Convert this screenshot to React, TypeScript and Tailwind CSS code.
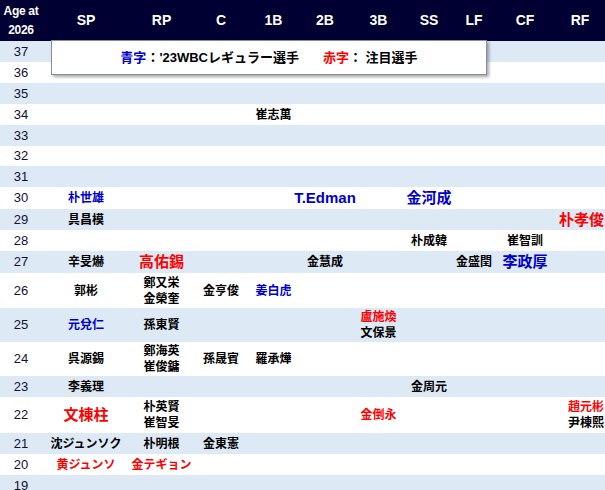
const cols = ['SP', 'RP', 'C', '1B', '2B', '3B', 'SS', 'LF', 'CF', 'RF']
const widths = [42, 88, 63, 56, 49, 54, 53, 48, 42, 60, 50]

type Cell = { t: string; c?: 'b' | 'r'; big?: boolean }[]
type Row = { age: number; h: number; cells?: Record<string, Cell> }

const rows: Row[] = [
  { age: 37, h: 21 }, { age: 36, h: 21 }, { age: 35, h: 21 },
  { age: 34, h: 21, cells: { '1B': [{ t: '崔志萬' }] } },
  { age: 33, h: 21 }, { age: 32, h: 20 }, { age: 31, h: 21 },
  { age: 30, h: 22, cells: { SP: [{ t: '朴世雄', c: 'b' }], '2B': [{ t: 'T.Edman', c: 'b', big: true }], SS: [{ t: '金河成', c: 'b', big: true }] } },
  { age: 29, h: 21, cells: { SP: [{ t: '具昌模' }], RF: [{ t: '朴孝俊', c: 'r', big: true }] } },
  { age: 28, h: 21, cells: { SS: [{ t: '朴成韓' }], CF: [{ t: '崔智訓' }] } },
  { age: 27, h: 22, cells: { SP: [{ t: '辛旻爀' }], RP: [{ t: '高佑錫', c: 'r', big: true }], '2B': [{ t: '金慧成' }], LF: [{ t: '金盛閏' }], CF: [{ t: '李政厚', c: 'b', big: true }] } },
  { age: 26, h: 35, cells: { SP: [{ t: '郭彬' }], RP: [{ t: '鄭又栄' }, { t: '金榮奎' }], C: [{ t: '金亨俊' }], '1B': [{ t: '姜白虎', c: 'b' }] } },
  { age: 25, h: 34, cells: { SP: [{ t: '元兌仁', c: 'b' }], RP: [{ t: '孫東賢' }], '3B': [{ t: '盧施煥', c: 'r' }, { t: '文保景' }] } },
  { age: 24, h: 34, cells: { SP: [{ t: '呉源錫' }], RP: [{ t: '鄭海英' }, { t: '崔俊鏞' }], C: [{ t: '孫晟賓' }], '1B': [{ t: '羅承燁' }] } },
  { age: 23, h: 21, cells: { SP: [{ t: '李義理' }], SS: [{ t: '金周元' }] } },
  { age: 22, h: 36, cells: { SP: [{ t: '文棟柱', c: 'r', big: true }], RP: [{ t: '朴英賢' }, { t: '崔智旻' }], '3B': [{ t: '金倒永', c: 'r' }], RF: [{ t: '趙元彬', c: 'r' }, { t: '尹棟熙' }] } },
  { age: 21, h: 21, cells: { SP: [{ t: '沈ジュンソク' }], RP: [{ t: '朴明根' }], C: [{ t: '金東憲' }] } },
  { age: 20, h: 21, cells: { SP: [{ t: '黄ジュンソ', c: 'r' }], RP: [{ t: '金テギョン', c: 'r' }] } },
  { age: 19, h: 21 },
]

const font = { fontFamily: '"Liberation Sans", "Noto Sans CJK JP", sans-serif' }

export default function App() {
  return (
    <div className="relative w-[605px] h-[490px] overflow-hidden bg-white" style={font}>
      <div className="flex h-[41px] bg-[#000033] text-white font-bold">
        <div className="w-[42px] flex flex-col items-center justify-center text-[12px] leading-[19px] tracking-tight">
          <span>Age at</span><span>2026</span>
        </div>
        {cols.map((c, i) => (
          <div key={c} style={{ width: widths[i + 1] }} className="flex items-center justify-center text-[14px]">{c}</div>
        ))}
      </div>
      {rows.map((r, idx) => (
        <div key={r.age} style={{ height: r.h }} className={`flex ${idx % 2 === 0 ? 'bg-[#dde9f5]' : 'bg-white'}`}>
          <div className="w-[42px] flex items-center justify-center text-[13px] text-[#111133]">{r.age}</div>
          {cols.map((c, i) => (
            <div key={c} style={{ width: widths[i + 1] }} className={`flex flex-col justify-center items-center font-bold whitespace-nowrap ${c === 'RF' ? 'items-end pr-[1px]' : ''}`}>
              {r.cells?.[c]?.map((n, k) => (
                <span
                  key={k}
                  className={`${n.big ? 'text-[15px]' : 'text-[12px]'} leading-[16px] ${n.c === 'b' ? 'text-[#0000cc]' : n.c === 'r' ? 'text-[#ff0000]' : 'text-black'}`}
                >
                  {n.t}
                </span>
              ))}
            </div>
          ))}
        </div>
      ))}
      <div className="absolute left-[51px] top-[40px] w-[436px] h-[35px] bg-white border border-[#8090a0] shadow-[2px_2px_3px_rgba(0,0,0,0.35)] flex items-center justify-center gap-[24px] text-[13px] font-bold">
        <span><span className="text-[#0000cc]">青字</span>：'23WBCレギュラー選手</span>
        <span><span className="text-[#ff0000]">赤字</span>： 注目選手</span>
      </div>
    </div>
  )
}
